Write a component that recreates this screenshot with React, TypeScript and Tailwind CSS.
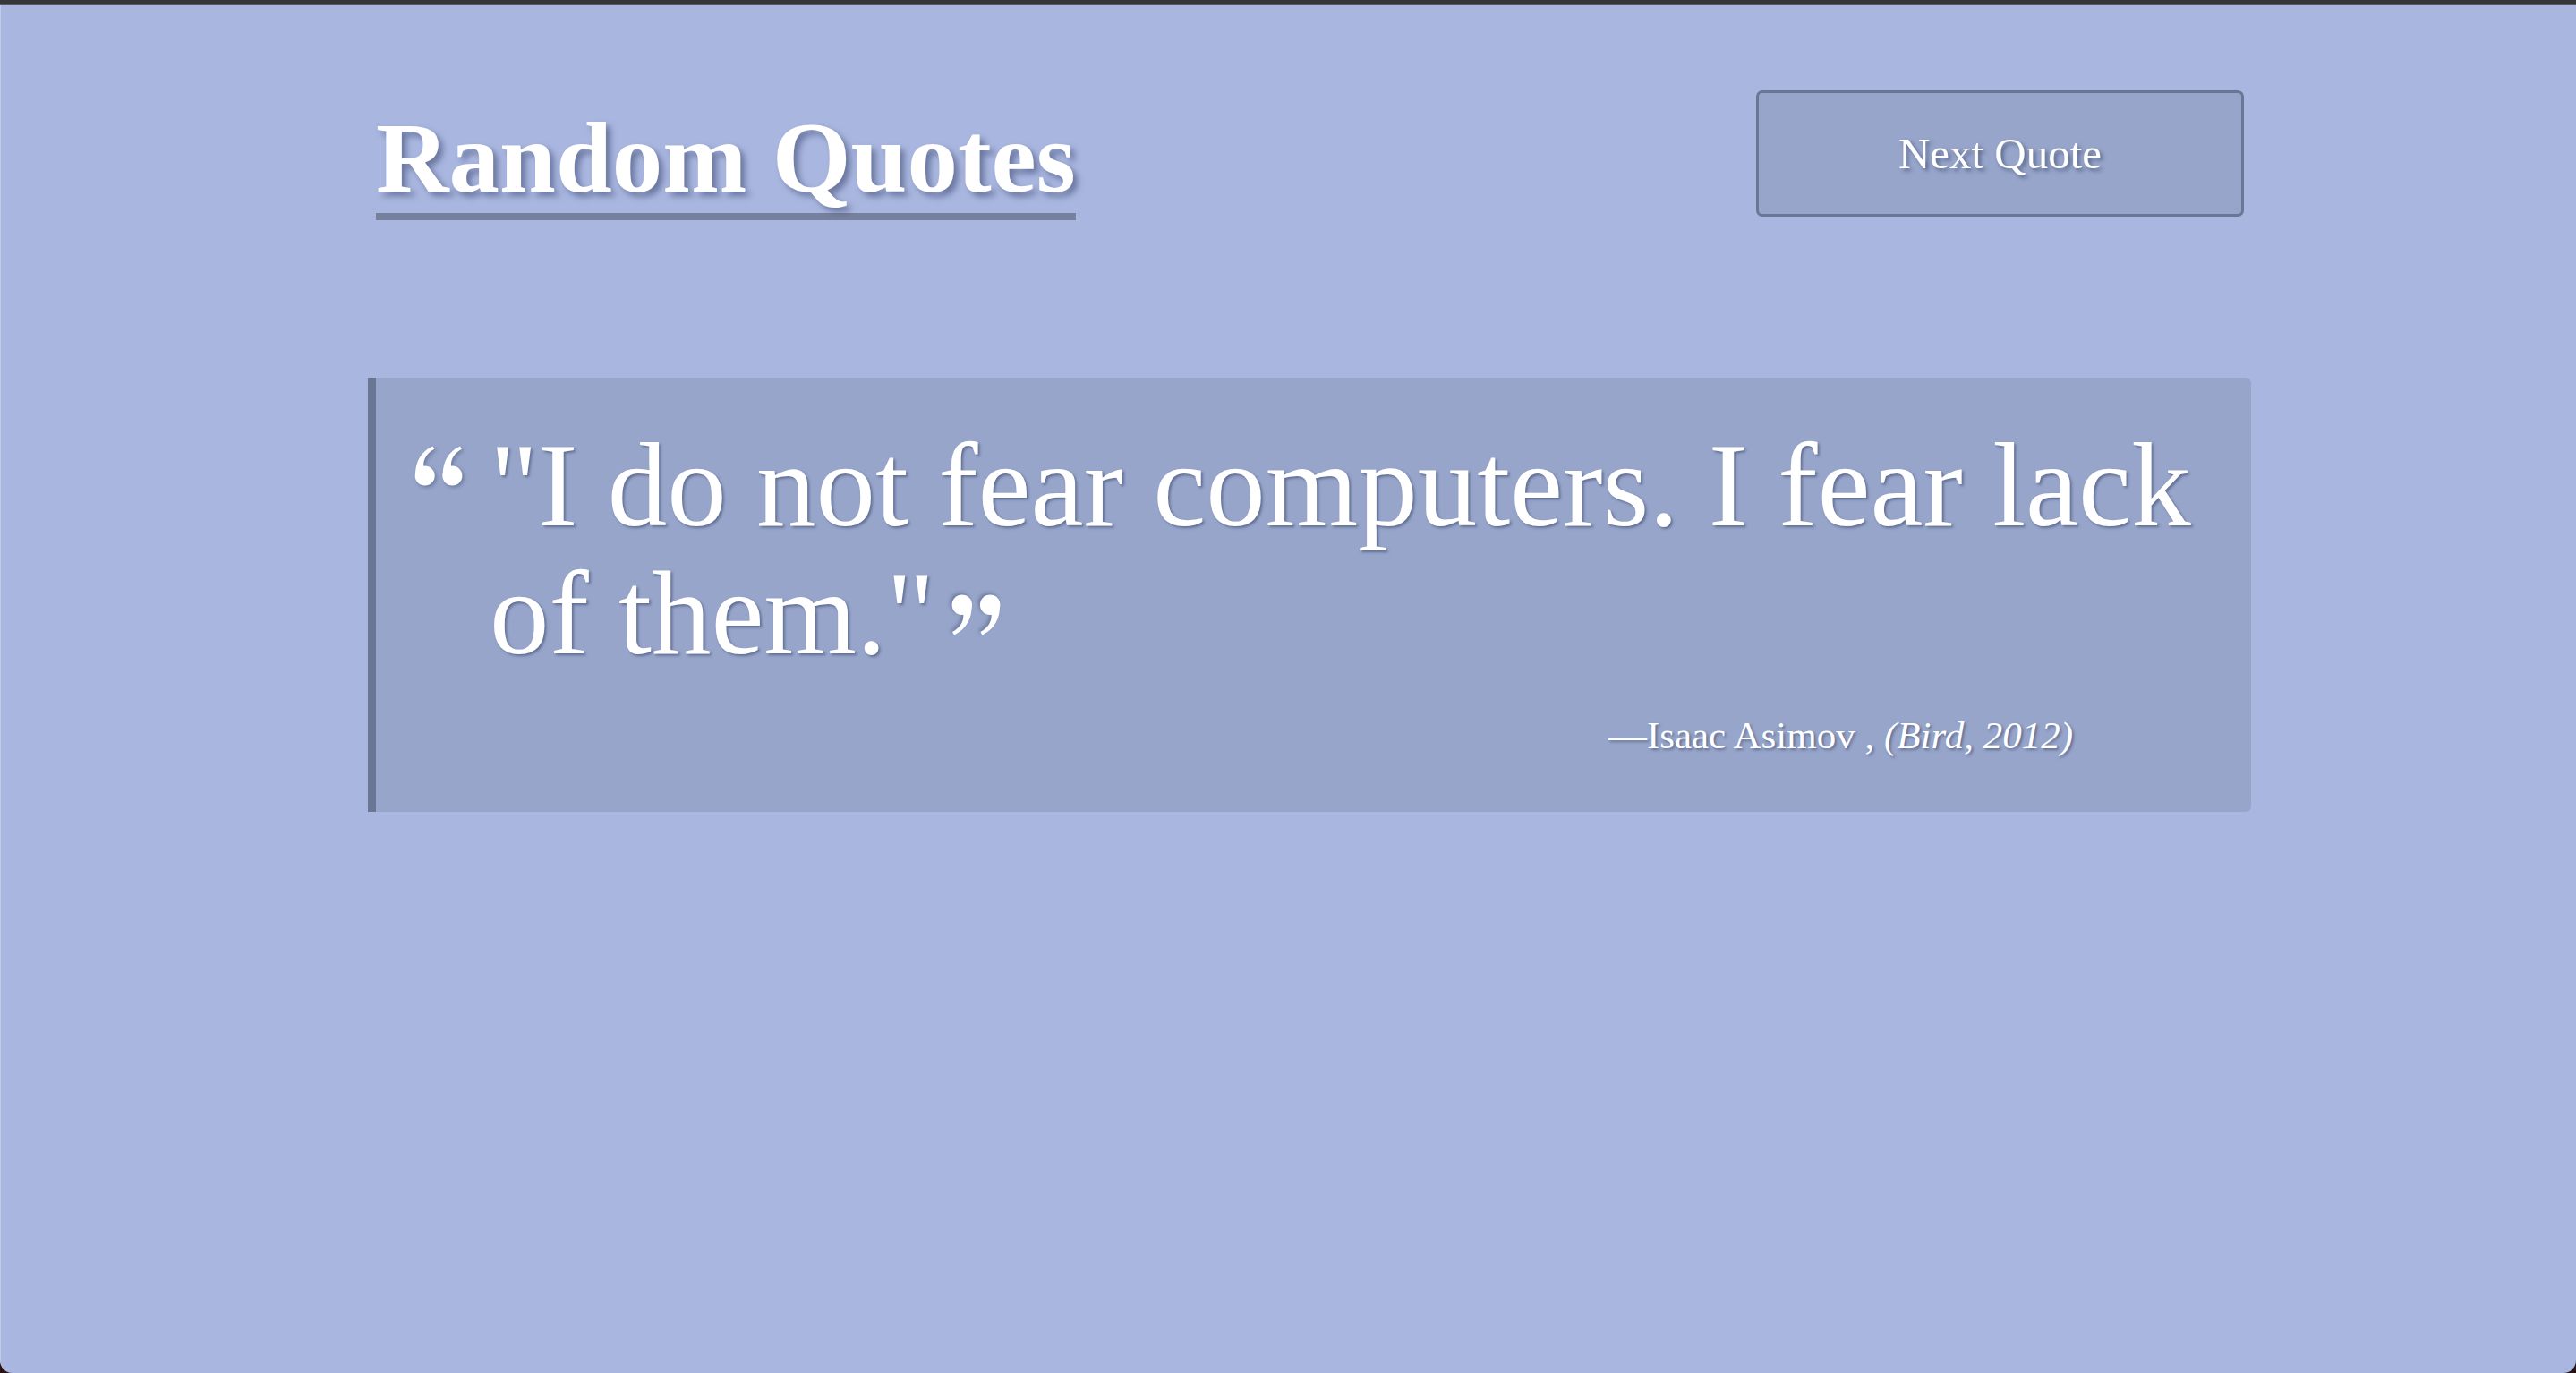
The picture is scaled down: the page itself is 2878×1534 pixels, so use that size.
import React from "react";

const serif = "font-['Liberation_Serif','Times_New_Roman',serif]";

const QuoteMark: React.FC<{ flip?: boolean; className?: string }> = ({ flip, className }) => {
  return (
    <svg
      viewBox="0 0 60 48"
      className={`${flip ? "rotate-180" : ""} drop-shadow-[2px_2px_2px_rgba(60,70,110,0.45)] ${className ?? ""}`}
      fill="#ffffff"
    >
      <circle cx="13" cy="35" r="11.5" />
      <path d="M2 36 C1 20 8 7 22 0.5 L24 4 C15 9 11 16 11.5 24 Z" />
      <circle cx="45" cy="35" r="11.5" />
      <path d="M34 36 C33 20 40 7 54 0.5 L56 4 C47 9 43 16 43.5 24 Z" />
    </svg>
  );
};

const App: React.FC = () => {
  return (
    <div className={`w-[2878px] h-[1534px] flex flex-col bg-[#2b1212] overflow-hidden ${serif}`}>
      <div className="h-[4px] bg-[#36373b]" />
      <div className="h-[2px] bg-[#5b5d63]" />
      <main className="flex-1 bg-[#a9b7e0] rounded-b-[14px] border-l border-[#c3cbe9]">
        <div className="ml-[410px] w-[2104px]">
          <header className="flex items-start justify-between pt-[95px] pl-[9px] pr-[8px]">
            <h1 className="mt-[18px] inline-block text-[113px] font-bold leading-none text-white pb-[6px] border-b-[8px] border-[#77819d] [text-shadow:5px_5px_7px_rgba(55,65,105,0.55)]">
              Random Quotes
            </h1>
            <button className="w-[545px] h-[141px] rounded-[7px] border-[3px] border-[#6b7594] bg-[#96a5c9] text-[49px] text-white [text-shadow:3px_3px_4px_rgba(55,65,105,0.6)]">
              Next Quote
            </button>
          </header>

          <section className="mt-[176px] bg-[#96a5c9] border-l-[9px] border-[#6b7594] rounded-r-[6px] pt-[49px] pb-[59px] pl-[42px] pr-[40px]">
            <div className="flex items-start gap-[27px]">
              <QuoteMark className="mt-[27px] w-[58px] h-[46px] shrink-0" />
              <p className="flex-1 text-[133px] leading-[143px] text-white [text-shadow:2px_2px_3px_rgba(55,65,105,0.55)]">
                "I do not fear computers. I fear lack of them."
                <QuoteMark flip className="inline-block ml-[15px] w-[59px] h-[47px] align-[20px]" />
              </p>
            </div>
            <div className="mt-[39px] flex justify-end mr-[159px]">
              <p className="text-[43px] leading-[1.2] text-white [text-shadow:2px_2px_3px_rgba(55,65,105,0.55)]">
                —Isaac Asimov , <i>(Bird, 2012)</i>
              </p>
            </div>
          </section>
        </div>
      </main>
    </div>
  );
};

export default App;
